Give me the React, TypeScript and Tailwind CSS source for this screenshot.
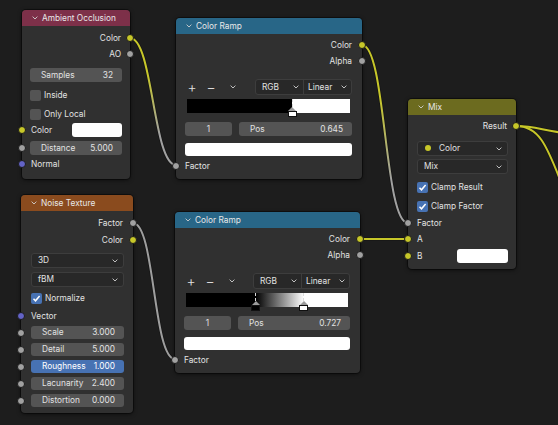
import React from 'react';

const YELLOW = '#c7c729';
const GRAY = '#a1a1a1';
const PURPLE = '#6363c7';

const Socket = ({ color, side }: { color: string; side: 'in' | 'out' }) => (
    <span
        className={`absolute top-1/2 -translate-y-1/2 w-[8px] h-[8px] rounded-full border border-[#1b1b1b] ${side === 'in' ? '-left-[4px]' : '-right-[4px]'}`}
        style={{ backgroundColor: color }}
    />
);

const Row = ({
    children,
    inColor,
    outColor,
    className = '',
    h = 'h-[16px]',
}: {
    children?: React.ReactNode;
    inColor?: string;
    outColor?: string;
    className?: string;
    h?: string;
}) => (
    <div className={`relative flex items-center ${h} ${className}`}>
        {inColor && <Socket color={inColor} side="in" />}
        {outColor && <Socket color={outColor} side="out" />}
        {children}
    </div>
);

const Chevron = ({ className = '' }: { className?: string }) => (
    <svg width="6" height="4" viewBox="0 0 6 4" className={className}>
        <polyline points="0.6,0.6 3,3 5.4,0.6" fill="none" stroke="#d0d0d0" strokeWidth="0.9" />
    </svg>
);

const Slider = ({ label, value, active }: { label: string; value: string; active?: boolean }) => (
    <div
        className={`flex-1 h-full rounded-[3px] flex items-center justify-between pl-[11px] pr-[9px] ${active ? 'bg-[#4772b3] text-white' : 'bg-[#545454]'}`}
    >
        <span>{label}</span>
        <span>{value}</span>
    </div>
);

const Dropdown = ({ label, dot, className = '' }: { label: string; dot?: boolean; className?: string }) => (
    <div
        className={`flex items-center justify-between bg-[#282828] border border-[#3d3d3d] rounded-[3px] pl-[6px] pr-[5px] ${className}`}
    >
        <span className="flex items-center">
            {dot && <span className="w-[6px] h-[6px] rounded-full bg-[#c7c729] ml-[1px] mr-[8px]" />}
            {label}
        </span>
        <Chevron />
    </div>
);

const Checkbox = ({ label, checked }: { label: string; checked?: boolean }) => (
    <div className="flex items-center gap-[3px]">
        <span
            className={`w-[11px] h-[11px] rounded-[2px] flex items-center justify-center ${checked ? 'bg-[#4772b3]' : 'bg-[#545454]'}`}
        >
            {checked && (
                <svg width="9" height="9" viewBox="0 0 9 9">
                    <polyline points="1.5,4.8 3.5,6.8 7.6,2" fill="none" stroke="white" strokeWidth="1.5" />
                </svg>
            )}
        </span>
        <span>{label}</span>
    </div>
);

const Header = ({ title, color }: { title: string; color: string }) => (
    <div className={`h-[16px] rounded-t-[4px] flex items-center pl-[10px] gap-[4px] ${color}`}>
        <Chevron />
        <span className="text-[#e8e8e8]">{title}</span>
    </div>
);

const Marker = ({ pos, fill }: { pos: number; fill: string }) => (
    <div
        className="absolute top-0 w-[10px] h-[18px] -translate-x-1/2 flex flex-col items-center"
        style={{ left: `${pos * 100}%` }}
    >
        <div className="w-0 h-[8px] border-l border-dashed border-[#dcdcdc]" />
        <svg width="10" height="4" viewBox="0 0 10 4" className="block">
            <polygon points="5,0 9,4 1,4" fill="#9a9a9a" />
        </svg>
        <div className="w-[9px] h-[6px] border border-[#111]" style={{ backgroundColor: fill }} />
    </div>
);

const ColorRamp = ({
    className,
    pos,
    ramp,
    markers,
}: {
    className: string;
    pos: string;
    ramp: string;
    markers: { pos: number; fill: string }[];
}) => (
    <div className={`absolute ${className} bg-[#303030] rounded-[4px] shadow-[0_1px_4px_rgba(0,0,0,0.6)] ring-1 ring-black/40`}>
        <Header title="Color Ramp" color="bg-[#286687]" />
        <div className="pt-[3px] pb-[5px]">
            <Row outColor={YELLOW} className="justify-end pr-[10px]">Color</Row>
            <Row outColor={GRAY} className="justify-end pr-[10px]">Alpha</Row>
            <div className="mt-[10px] h-[16px] flex items-center pl-[11px] pr-[10px]">
                <span className="w-[10px] text-center text-[14px] font-light leading-none">+</span>
                <span className="ml-[9px] w-[10px] text-center text-[14px] font-light leading-none">−</span>
                <Chevron className="ml-[14px]" />
                <div className="ml-auto flex h-[16px] w-[97px] bg-[#282828] border border-[#3d3d3d] rounded-[3px]">
                    <div className="w-[48px] flex items-center justify-between pl-[6px] pr-[4px] border-r border-[#3d3d3d]">
                        <span>RGB</span>
                        <Chevron />
                    </div>
                    <div className="flex-1 flex items-center justify-between pl-[4px] pr-[4px]">
                        <span>Linear</span>
                        <Chevron />
                    </div>
                </div>
            </div>
            <div className="relative mt-[4px] ml-[11px] mr-[12px] h-[14px]" style={{ background: ramp }}>
                {markers.map((m, i) => (
                    <Marker key={i} pos={m.pos} fill={m.fill} />
                ))}
            </div>
            <div className="mt-[9px] h-[14px] flex gap-[7px] pl-[9px] pr-[10px]">
                <div className="w-[47px] bg-[#545454] rounded-[3px] flex items-center justify-center">1</div>
                <div className="flex-1 bg-[#545454] rounded-[3px] flex items-center justify-between pl-[11px] pr-[9px]">
                    <span>Pos</span>
                    <span>{pos}</span>
                </div>
            </div>
            <div className="mt-[7px] ml-[9px] mr-[10px] h-[13px] bg-white rounded-[3px]" />
            <Row inColor={GRAY} className="mt-[2px] pl-[9px]">Factor</Row>
        </div>
    </div>
);

const App = () => {
    return (
        <div className="relative w-[558px] h-[425px] overflow-hidden bg-[#1d1d1d] text-[#e2e2e2] text-[8.3px] leading-none font-['Inter','Noto_Sans',sans-serif]">
            {/* wires */}
            <svg className="absolute inset-0" width="558" height="425" viewBox="0 0 558 425">
                <defs>
                    <linearGradient id="w1" gradientUnits="userSpaceOnUse" x1="130" y1="37" x2="176" y2="164">
                        <stop offset="0.3" stopColor={YELLOW} />
                        <stop offset="0.75" stopColor={GRAY} />
                    </linearGradient>
                    <linearGradient id="w2" gradientUnits="userSpaceOnUse" x1="362" y1="45" x2="408" y2="223">
                        <stop offset="0.3" stopColor={YELLOW} />
                        <stop offset="0.75" stopColor={GRAY} />
                    </linearGradient>
                </defs>
                <g fill="none" stroke="#141414" strokeWidth="3.6" opacity="0.7">
                    <path d="M130,38 C153,38 153,165 176,165" />
                    <path d="M362,45 C386,45 384,223 408,223" />
                    <path d="M360,239 L408,239" />
                    <path d="M133,223 C155,223 153,359 175,359" />
                    <path d="M516,126 C540,126 545,133 580,134" />
                    <path d="M516,126 C538,126 546,142 564,190" />
                </g>
                <g fill="none" strokeWidth="2">
                    <path d="M130,38 C153,38 153,165 176,165" stroke="url(#w1)" />
                    <path d="M362,45 C386,45 384,223 408,223" stroke="url(#w2)" />
                    <path d="M360,239 L408,239" stroke={YELLOW} />
                    <path d="M133,223 C155,223 153,359 175,359" stroke="#9e9e9e" />
                    <path d="M516,126 C540,126 545,133 580,134" stroke={YELLOW} />
                    <path d="M516,126 C538,126 546,142 564,190" stroke={YELLOW} />
                </g>
            </svg>

            {/* Ambient Occlusion */}
            <div className="absolute left-[22px] top-[10px] w-[108px] bg-[#303030] rounded-[4px] shadow-[0_1px_4px_rgba(0,0,0,0.6)] ring-1 ring-black/40">
                <Header title="Ambient Occlusion" color="bg-[#7d3049]" />
                <div className="pt-[4px] pb-[7px]">
                    <Row outColor={YELLOW} className="justify-end pr-[9px]">Color</Row>
                    <Row outColor={GRAY} className="justify-end pr-[9px]">AO</Row>
                    <div className="mt-[6px] h-[14px] flex px-[8px]">
                        <Slider label="Samples" value="32" />
                    </div>
                    <Row className="mt-[5px] px-[8px]">
                        <Checkbox label="Inside" />
                    </Row>
                    <Row className="mt-[3px] px-[8px]">
                        <Checkbox label="Only Local" />
                    </Row>
                    <Row inColor={YELLOW} className="pl-[9px] pr-[8px]">
                        <span>Color</span>
                        <span className="ml-auto w-[50px] h-[14px] bg-white rounded-[3px]" />
                    </Row>
                    <Row inColor={GRAY} h="h-[14px]" className="mt-[3px] px-[8px]">
                        <Slider label="Distance" value="5.000" />
                    </Row>
                    <Row inColor={PURPLE} className="mt-[1px] pl-[9px]">Normal</Row>
                </div>
            </div>

            <ColorRamp
                className="left-[176px] top-[18px] w-[186px]"
                pos="0.645"
                ramp="linear-gradient(to right, #000 0%, #000 64.5%, #fff 64.5%, #fff 100%)"
                markers={[{ pos: 0.645, fill: '#ffffff' }]}
            />

            <ColorRamp
                className="left-[175px] top-[212px] w-[185px]"
                pos="0.727"
                ramp="linear-gradient(to right, #000 0%, #000 43%, #fff 72.7%, #fff 100%)"
                markers={[
                    { pos: 0.43, fill: '#000000' },
                    { pos: 0.727, fill: '#ffffff' },
                ]}
            />

            {/* Mix */}
            <div className="absolute left-[408px] top-[99px] w-[108px] bg-[#303030] rounded-[4px] shadow-[0_1px_4px_rgba(0,0,0,0.6)] ring-1 ring-black/40">
                <Header title="Mix" color="bg-[#6c6b1f]" />
                <div className="pt-[3px] pb-[5px]">
                    <Row outColor={YELLOW} className="justify-end pr-[9px]">Result</Row>
                    <div className="mt-[7px] pl-[9px] pr-[8px]">
                        <Dropdown label="Color" dot className="h-[15px]" />
                    </div>
                    <div className="mt-[3px] pl-[9px] pr-[8px]">
                        <Dropdown label="Mix" className="h-[15px]" />
                    </div>
                    <Row className="mt-[5px] pl-[9px]">
                        <Checkbox label="Clamp Result" checked />
                    </Row>
                    <Row className="mt-[3px] pl-[9px]">
                        <Checkbox label="Clamp Factor" checked />
                    </Row>
                    <Row inColor={GRAY} className="mt-[1px] pl-[9px]">Factor</Row>
                    <Row inColor={YELLOW} className="pl-[9px]">A</Row>
                    <Row inColor={YELLOW} className="mt-[1px] pl-[9px] pr-[8px]">
                        <span>B</span>
                        <span className="ml-auto w-[51px] h-[14px] bg-white rounded-[3px]" />
                    </Row>
                </div>
            </div>

            {/* Noise Texture */}
            <div className="absolute left-[21px] top-[195px] w-[112px] bg-[#303030] rounded-[4px] shadow-[0_1px_4px_rgba(0,0,0,0.6)] ring-1 ring-black/40">
                <Header title="Noise Texture" color="bg-[#8a4b1e]" />
                <div className="pt-[4px] pb-[6px]">
                    <Row outColor={GRAY} className="justify-end pr-[10px]">Factor</Row>
                    <Row outColor={YELLOW} className="mt-[1px] justify-end pr-[10px]">Color</Row>
                    <div className="mt-[5px] pl-[10px] pr-[9px]">
                        <Dropdown label="3D" className="h-[15px]" />
                    </div>
                    <div className="mt-[4px] pl-[10px] pr-[9px]">
                        <Dropdown label="fBM" className="h-[15px]" />
                    </div>
                    <Row className="mt-[3px] pl-[10px]">
                        <Checkbox label="Normalize" checked />
                    </Row>
                    <Row inColor={PURPLE} className="mt-[2px] pl-[10px]">Vector</Row>
                    <Row inColor={GRAY} h="h-[13px]" className="mt-[2px] pl-[10px] pr-[9px]">
                        <Slider label="Scale" value="3.000" />
                    </Row>
                    <Row inColor={GRAY} h="h-[13px]" className="mt-[4px] pl-[10px] pr-[9px]">
                        <Slider label="Detail" value="5.000" />
                    </Row>
                    <Row inColor={GRAY} h="h-[13px]" className="mt-[4px] pl-[10px] pr-[9px]">
                        <Slider label="Roughness" value="1.000" active />
                    </Row>
                    <Row inColor={GRAY} h="h-[13px]" className="mt-[4px] pl-[10px] pr-[9px]">
                        <Slider label="Lacunarity" value="2.400" />
                    </Row>
                    <Row inColor={GRAY} h="h-[13px]" className="mt-[4px] pl-[10px] pr-[9px]">
                        <Slider label="Distortion" value="0.000" />
                    </Row>
                </div>
            </div>
        </div>
    );
};

export default App;
